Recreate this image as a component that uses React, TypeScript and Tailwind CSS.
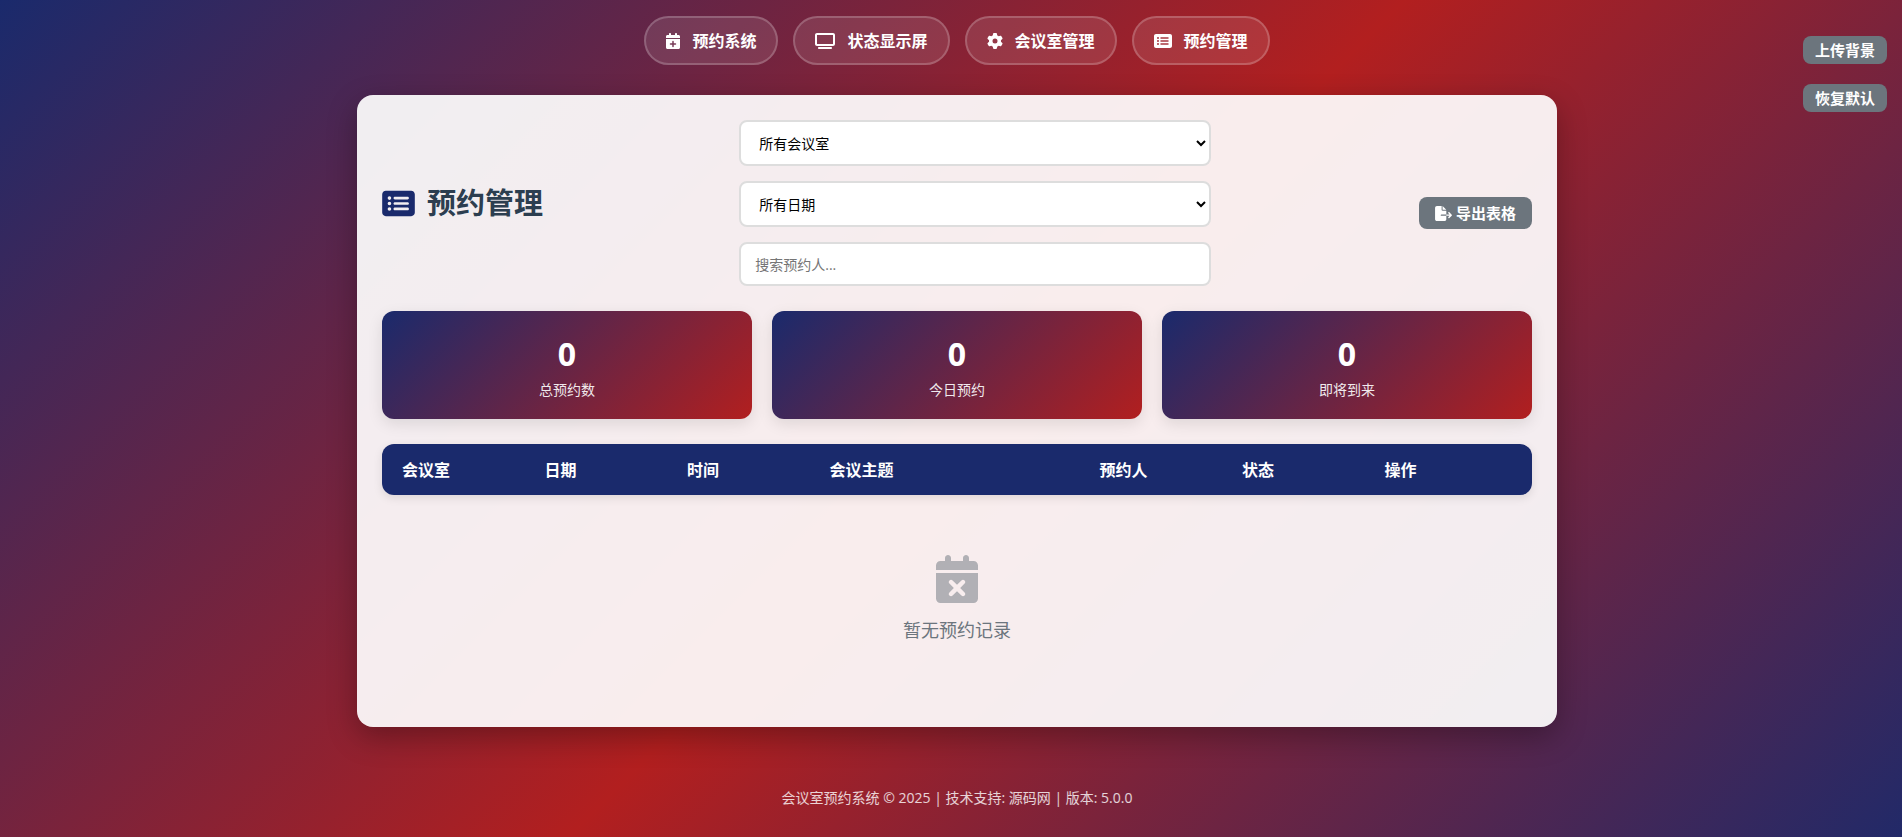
import {
  FaCalendarPlus,
  FaCalendarXmark,
  FaFileExport,
  FaGear,
  FaRectangleList,
  FaTv,
} from "react-icons/fa6";

const navItems = [
  { label: "预约系统", Icon: FaCalendarPlus, size: "h-4 w-[14px]" },
  { label: "状态显示屏", Icon: FaTv, size: "h-4 w-5" },
  { label: "会议室管理", Icon: FaGear, size: "h-4 w-4" },
  { label: "预约管理", Icon: FaRectangleList, size: "h-4 w-[18px]" },
];

const stats = [
  { label: "总预约数", value: 0 },
  { label: "今日预约", value: 0 },
  { label: "即将到来", value: 0 },
];

const columns = ["会议室", "日期", "时间", "会议主题", "预约人", "状态", "操作"];

const field =
  "block w-full rounded-lg border-2 border-[#dddddd] bg-white px-[14px] text-sm text-black placeholder:text-[#757575]";

const greyButton = "rounded-lg bg-[#6c757d] text-[15px] font-bold text-white";

export default function App() {
  return (
    <div className="relative flex min-h-screen flex-col items-center bg-[#1a2a6c] bg-[linear-gradient(135deg,#1a2a6c,#b21f1f,#1a2a6c)] bg-[length:calc(100%+12px)_calc(100%+58px)] bg-no-repeat pt-4 pr-5 pl-8 font-['Open_Sans','Noto_Sans_CJK_SC',sans-serif] text-[#2c3e50]">
      <nav className="flex flex-wrap justify-center gap-[15px]">
        {navItems.map(({ label, Icon, size }) => (
          <a
            key={label}
            href="#"
            className="flex h-[49px] items-center gap-3 rounded-full border-2 border-white/20 bg-white/10 px-5 text-base font-bold text-white"
          >
            <Icon className={size} />
            {label}
          </a>
        ))}
      </nav>

      <div className="absolute top-9 right-[15px] flex flex-col gap-5">
        <button type="button" className={`${greyButton} h-7 px-3`}>上传背景</button>
        <button type="button" className={`${greyButton} h-7 px-3`}>恢复默认</button>
      </div>

      <main className="mt-[30px] min-h-[632px] w-full max-w-[1200px] rounded-2xl bg-white/92 p-[25px] shadow-[0_10px_30px_rgba(0,0,0,0.3)]">
        <header className="flex items-center justify-between">
          <h1 className="flex items-center gap-3 text-[29px] font-bold">
            <FaRectangleList className="h-[29px] w-[33px] text-[#1a2a6c]" />
            预约管理
          </h1>
          <div className="mr-3 flex w-[41%] flex-col gap-[15px]">
            <select aria-label="会议室" className={`${field} h-[46px]`}>
              <option>所有会议室</option>
            </select>
            <select aria-label="日期" className={`${field} h-[46px]`}>
              <option>所有日期</option>
            </select>
            <input type="text" aria-label="搜索预约人" placeholder="搜索预约人..." className={`${field} h-11`} />
          </div>
          <button type="button" className={`${greyButton} mt-5 flex h-8 items-center gap-1 px-4`}>
            <FaFileExport className="h-[15px] w-[17px]" />
            导出表格
          </button>
        </header>

        <section className="mt-[25px] grid grid-cols-3 gap-5">
          {stats.map(({ label, value }) => (
            <div
              key={label}
              className="flex h-[108px] flex-col items-center justify-center rounded-xl bg-[linear-gradient(135deg,#1a2a6c,#b21f1f)] pt-0.5 text-white shadow-[0_5px_15px_rgba(0,0,0,0.1)]"
            >
              <div className="text-[32px] leading-[44px] font-bold">{value}</div>
              <div className="mt-1 text-sm leading-5 opacity-90">{label}</div>
            </div>
          ))}
        </section>

        <table className="mt-[25px] block w-full">
          <thead className="block rounded-xl bg-[#1a2a6c] text-white shadow-[0_3px_10px_rgba(0,0,0,0.1)]">
            <tr className="grid h-[51px] grid-cols-[1fr_1fr_1fr_2fr_1fr_1fr_1fr] items-center gap-[15px] px-5">
              {columns.map((name) => (
                <th key={name} className="text-left text-base font-bold">{name}</th>
              ))}
            </tr>
          </thead>
          <tbody className="block">
            <tr className="block">
              <td colSpan={7} className="flex flex-col items-center pt-[60px] text-lg text-[#6c757d]">
                <FaCalendarXmark className="h-12 w-[42px] opacity-50" />
                <span className="mt-[13px]">暂无预约记录</span>
              </td>
            </tr>
          </tbody>
        </table>
      </main>

      <footer className="mt-[59px] text-sm leading-6 text-white/80">
        会议室预约系统 © 2025 | 技术支持: 源码网 | 版本: 5.0.0
      </footer>
    </div>
  );
}
